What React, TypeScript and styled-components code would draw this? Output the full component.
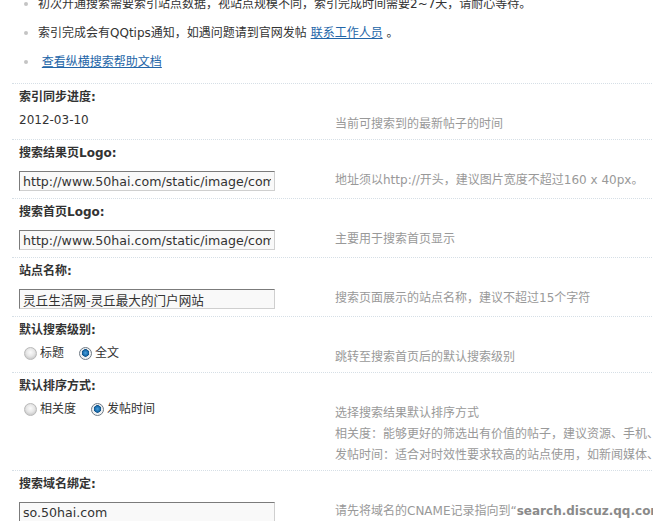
import React from 'react';
import styled, {createGlobalStyle} from "styled-components";

const GlobalStyle = createGlobalStyle`
  html, body {
    margin: 0;
    padding: 0;
    background: #fff;
    overflow: hidden;
  }
  body {
    font: 12px "DejaVu Sans", "Noto Sans CJK SC", sans-serif;
    color: #333;
  }
`;

const Page = styled.div`
  margin-top: -10px;
  padding-left: 12px;
  width: 1000px;
`;

const TipsList = styled.ul`
  list-style: none;
  margin: 0 0 6px;
  padding: 0 0 0 12px;
`;

const TipItem = styled.li`
  position: relative;
  height: 29px;
  line-height: 29px;
  padding-left: 14px;
  white-space: nowrap;

  &::before {
    content: "";
    position: absolute;
    left: 0;
    top: 12px;
    width: 4px;
    height: 4px;
    border-radius: 50%;
    background: #c4c4c4;
  }
`;

const Link = styled.a`
  color: #2366a8;
  text-decoration: underline;
`;

const Section = styled.div`
  border-top: 1px dotted #d6dfe6;
`;

const Title = styled.div`
  padding: 3px 7px 3px;
  line-height: 20px;
  font-weight: bold;
  white-space: nowrap;
`;

const ValueRow = styled.div`
  display: flex;
  align-items: flex-start;
`;

const Field = styled.div<{ kind: 'text' | 'input' | 'radio' }>`
  width: 316px;
  flex: none;
  padding: ${props => props.kind === 'input' ? '5px 0 7px 7px' : '0 0 9px 7px'};
  line-height: 20px;
  display: flex;
  align-items: center;
`;

const Tip = styled.div<{ lines?: number }>`
  padding: 4px 0 4px;
  line-height: ${props => (props.lines && props.lines > 1) ? '21px' : '20px'};
  color: #999;
  white-space: nowrap;

  strong {
    color: #8a8a8a;
  }
`;

const TextInput = styled.input`
  box-sizing: border-box;
  width: 256px;
  height: 20px;
  margin: 0;
  padding: 0 3px;
  border: 1px solid;
  border-color: #7b7b7b #cfcfcf #cfcfcf #7b7b7b;
  background: #f9f9f9;
  font: 12.6px "DejaVu Sans", "Noto Sans CJK SC", sans-serif;
  color: #333;
  outline: none;
`;

const Choice = styled.label`
  display: inline-flex;
  align-items: center;
  margin-right: 10px;
  white-space: nowrap;
`;

const RadioDot = styled.span<{ checked?: boolean }>`
  box-sizing: border-box;
  width: 13px;
  height: 13px;
  margin: 0 3px 0 5px;
  border-radius: 50%;
  border: 1px solid ${props => props.checked ? '#6f7a84' : '#b9b9b9'};
  background: ${props => props.checked
    ? 'radial-gradient(circle at 50% 45%, #4aa0de 0, #1b6fae 2.5px, #0d4f86 3.5px, #e9ecef 4px, #f6f6f6 6px)'
    : 'radial-gradient(circle at 50% 40%, #fbfbfb 0, #e6e6e6 4px, #d0d0d0 6px)'};
`;

interface RadioOption {
    label: string;
    checked?: boolean;
}

function RadioGroup({options}: { options: RadioOption[] }) {
    return (
        <>
            {options.map(o => (
                <Choice key={o.label}>
                    <RadioDot checked={o.checked}/>
                    {o.label}
                </Choice>
            ))}
        </>
    );
}

function App() {
    return (
        <Page>
            <GlobalStyle/>
            <TipsList>
                <TipItem>初次开通搜索需要索引站点数据，视站点规模不同，索引完成时间需要2~7天，请耐心等待。</TipItem>
                <TipItem>索引完成会有QQtips通知，如遇问题请到官网发帖 <Link href="#">联系工作人员</Link> 。</TipItem>
                <TipItem>&nbsp;<Link href="#">查看纵横搜索帮助文档</Link></TipItem>
            </TipsList>

            <Section>
                <Title>索引同步进度:</Title>
                <ValueRow>
                    <Field kind="text">2012-03-10</Field>
                    <Tip>当前可搜索到的最新帖子的时间</Tip>
                </ValueRow>
            </Section>

            <Section>
                <Title>搜索结果页Logo:</Title>
                <ValueRow>
                    <Field kind="input">
                        <TextInput readOnly value="http://www.50hai.com/static/image/common/logo.png"/>
                    </Field>
                    <Tip>地址须以http://开头，建议图片宽度不超过160 x 40px。</Tip>
                </ValueRow>
            </Section>

            <Section>
                <Title>搜索首页Logo:</Title>
                <ValueRow>
                    <Field kind="input">
                        <TextInput readOnly value="http://www.50hai.com/static/image/common/logo.png"/>
                    </Field>
                    <Tip>主要用于搜索首页显示</Tip>
                </ValueRow>
            </Section>

            <Section>
                <Title>站点名称:</Title>
                <ValueRow>
                    <Field kind="input">
                        <TextInput readOnly value="灵丘生活网-灵丘最大的门户网站"/>
                    </Field>
                    <Tip>搜索页面展示的站点名称，建议不超过15个字符</Tip>
                </ValueRow>
            </Section>

            <Section>
                <Title>默认搜索级别:</Title>
                <ValueRow>
                    <Field kind="radio">
                        <RadioGroup options={[{label: '标题'}, {label: '全文', checked: true}]}/>
                    </Field>
                    <Tip>跳转至搜索首页后的默认搜索级别</Tip>
                </ValueRow>
            </Section>

            <Section>
                <Title>默认排序方式:</Title>
                <ValueRow>
                    <Field kind="radio">
                        <RadioGroup options={[{label: '相关度'}, {label: '发帖时间', checked: true}]}/>
                    </Field>
                    <Tip lines={3}>
                        选择搜索结果默认排序方式<br/>
                        相关度：能够更好的筛选出有价值的帖子，建议资源、手机、<br/>
                        发帖时间：适合对时效性要求较高的站点使用，如新闻媒体、
                    </Tip>
                </ValueRow>
            </Section>

            <Section>
                <Title>搜索域名绑定:</Title>
                <ValueRow>
                    <Field kind="input">
                        <TextInput readOnly value="so.50hai.com"/>
                    </Field>
                    <Tip>请先将域名的CNAME记录指向到“<strong>search.discuz.qq.com</strong>”</Tip>
                </ValueRow>
            </Section>
        </Page>
    );
}

export default App;
